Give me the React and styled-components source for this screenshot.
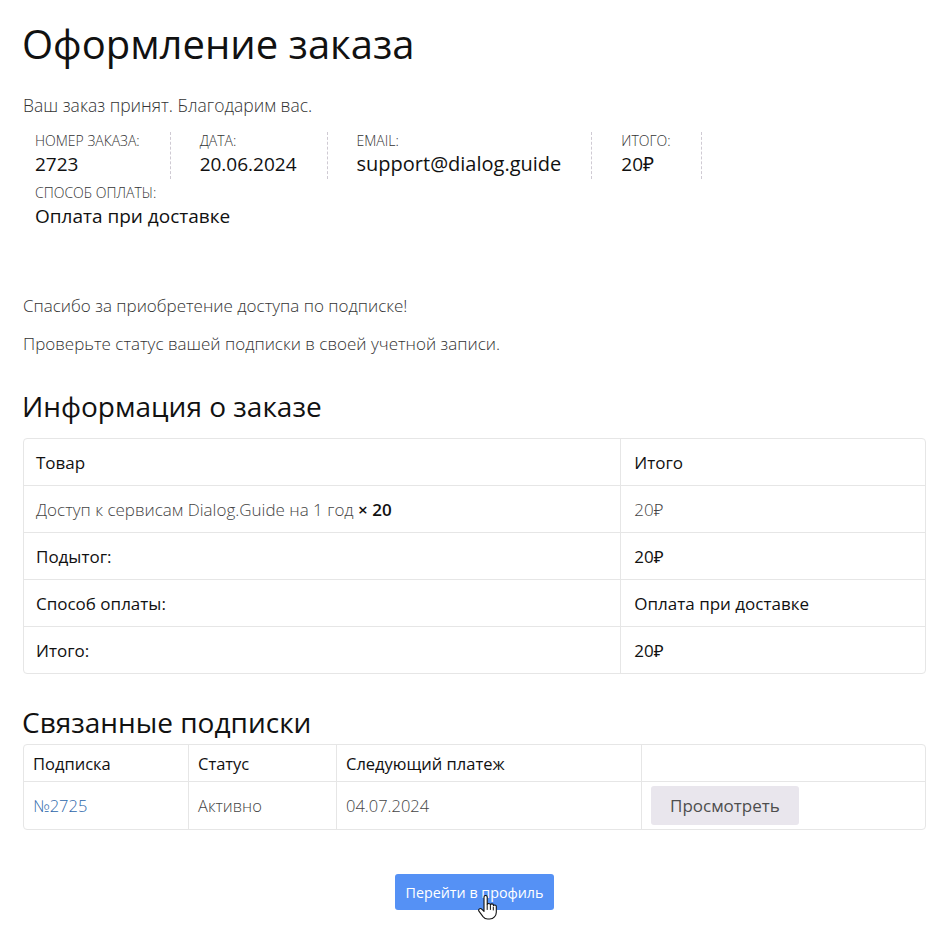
import styled, { createGlobalStyle } from 'styled-components'

const GlobalStyle = createGlobalStyle`
  body {
    margin: 0;
    background: #fff;
    font-family: "Open Sans", "Noto Sans", sans-serif;
    color: #1a1a1a;
  }
`

const Page = styled.main`
  padding: 20px 16px 20px 23px;
`

const Title = styled.h1`
  margin: 0 0 25px -1px;
  font-size: 40px;
  font-weight: 400;
  line-height: 48px;
  color: #111;
`

const Lead = styled.p`
  margin: 0 0 15px;
  font-size: 17.5px;
  font-weight: 300;
  line-height: 24px;
  color: #333;
`

const Details = styled.ul`
  display: flex;
  flex-wrap: wrap;
  margin: 0 0 63px;
  padding: 0 0 0 12px;
  list-style: none;
  row-gap: 5px;
`

const DetailItem = styled.li`
  margin-right: 29px;
  padding: 0 30px 3px 0;
  border-right: 1px dashed #cfcad3;
  text-transform: uppercase;
  font-size: 14px;
  font-weight: 300;
  color: #333;
  line-height: 18px;

  &:last-child {
    border-right: 0;
  }

  strong {
    display: block;
    margin-top: 2px;
    text-transform: none;
    font-size: ${p => p.$valueSize || 19}px;
    line-height: 24px;
    font-weight: 400;
    color: #111;
  }
`

const Note = styled.p`
  margin: 0 0 14px;
  font-size: 17px;
  font-weight: 300;
  line-height: 24px;
  color: #333;
`

const Heading = styled.h2`
  margin: ${p => p.$top}px 0 ${p => p.$bottom}px -1px;
  font-size: 28px;
  font-weight: 400;
  line-height: 34px;
  color: #111;
`

const Table = styled.table`
  width: 100%;
  border-collapse: separate;
  border-spacing: 0;
  border: 1px solid #e6e6e6;
  border-radius: 4px;
  font-size: ${p => p.$size}px;
`

const Cell = styled.td`
  height: ${p => p.$h}px;
  box-sizing: border-box;
  padding: 0 ${p => p.$pad}px;
  border-right: 1px solid #e6e6e6;
  border-bottom: 1px solid #e6e6e6;
  width: ${p => p.$w || 'auto'};
  text-align: left;
  font-weight: ${p => (p.$light ? 300 : 400)};
  color: ${p => (p.$light ? '#444' : '#111')};

  &:last-child {
    border-right: 0;
  }

  tr:last-child > & {
    border-bottom: 0;
  }

  b {
    font-weight: 600;
    color: #111;
  }
`

const Link = styled.a`
  color: #2c66aa;
  text-decoration: none;
`

const GrayButton = styled.button`
  height: 39px;
  padding: 0 19px;
  border: 0;
  border-radius: 3px;
  background: #e9e6ed;
  color: #4e4e4e;
  font-family: inherit;
  font-size: 17px;
`

const Footer = styled.div`
  display: flex;
  justify-content: center;
  margin-top: 44px;
`

const ButtonWrap = styled.div`
  position: relative;
`

const BlueButton = styled.button`
  height: 36px;
  padding: 0 11px;
  border: 0;
  border-radius: 3px;
  background: #5591f5;
  color: #fff;
  font-family: inherit;
  font-size: 14.3px;
`

const Cursor = styled.svg`
  position: absolute;
  left: 83px;
  top: 21px;
  width: 20px;
  height: 26px;
  pointer-events: none;
`

const orderRows = [
  { label: 'Подытог:', value: '20₽' },
  { label: 'Способ оплаты:', value: 'Оплата при доставке' },
  { label: 'Итого:', value: '20₽' },
]

export default function App() {
  return (
    <Page>
      <GlobalStyle />
      <Title>Оформление заказа</Title>
      <Lead>Ваш заказ принят. Благодарим вас.</Lead>
      <Details>
        <DetailItem>Номер заказа:<strong>2723</strong></DetailItem>
        <DetailItem>Дата:<strong>20.06.2024</strong></DetailItem>
        <DetailItem $valueSize={20}>Email:<strong>support@dialog.guide</strong></DetailItem>
        <DetailItem>Итого:<strong>20₽</strong></DetailItem>
        <DetailItem>Способ оплаты:<strong>Оплата при доставке</strong></DetailItem>
      </Details>

      <Note>Спасибо за приобретение доступа по подписке!</Note>
      <Note>Проверьте статус вашей подписки в своей учетной записи.</Note>

      <Heading $top={33} $bottom={15}>Информация о заказе</Heading>
      <Table $size={17}>
        <tbody>
          <tr>
            <Cell as="th" $h={47} $pad={12} $w="66.3%">Товар</Cell>
            <Cell as="th" $h={47} $pad={13}>Итого</Cell>
          </tr>
          <tr>
            <Cell $h={47} $pad={12} $light>Доступ к сервисам Dialog.Guide на 1 год <b>× 20</b></Cell>
            <Cell $h={47} $pad={13} $light>20₽</Cell>
          </tr>
          {orderRows.map((row, i) => (
            <tr key={row.label}>
              <Cell as="th" $h={i === 2 ? 46 : 47} $pad={12}>{row.label}</Cell>
              <Cell $h={i === 2 ? 46 : 47} $pad={13}>{row.value}</Cell>
            </tr>
          ))}
        </tbody>
      </Table>

      <Heading $top={31} $bottom={5}>Связанные подписки</Heading>
      <Table $size={16.5}>
        <tbody>
          <tr>
            <Cell as="th" $h={37} $pad={9} $w="165px">Подписка</Cell>
            <Cell as="th" $h={37} $pad={9} $w="148px">Статус</Cell>
            <Cell as="th" $h={37} $pad={9} $w="305px">Следующий платеж</Cell>
            <Cell as="th" $h={37} $pad={9} />
          </tr>
          <tr>
            <Cell $h={47} $pad={9} $light><Link href="#">№2725</Link></Cell>
            <Cell $h={47} $pad={9} $light>Активно</Cell>
            <Cell $h={47} $pad={9} $light>04.07.2024</Cell>
            <Cell $h={47} $pad={9}><GrayButton>Просмотреть</GrayButton></Cell>
          </tr>
        </tbody>
      </Table>

      <Footer>
        <ButtonWrap>
          <BlueButton>Перейти в профиль</BlueButton>
          <Cursor viewBox="0 0 20 26">
            <path
              d="M6 2.2c0-1 .7-1.7 1.6-1.7s1.6.7 1.6 1.7v7.3c.3-.6.9-1 1.6-1 .8 0 1.4.5 1.6 1.2.3-.5.9-.8 1.5-.8.9 0 1.6.7 1.6 1.6.3-.3.8-.5 1.2-.5.9 0 1.6.7 1.6 1.6v5.6c0 3.6-2.7 6.8-6.600 6.8H9.6c-2 0-3.4-.9-4.6-2.4L1.1 16.3c-.6-.8-.5-1.8.3-2.4.7-.5 1.7-.4 2.3.3L6 16.4V2.2z"
              fill="#fff"
              stroke="#111"
              strokeWidth="1.1"
              strokeLinejoin="round"
            />
            <path d="M9.2 10v4.5M12.4 10.5v4M15.3 12v3" stroke="#111" strokeWidth="1" strokeLinecap="round" />
          </Cursor>
        </ButtonWrap>
      </Footer>
    </Page>
  )
}
